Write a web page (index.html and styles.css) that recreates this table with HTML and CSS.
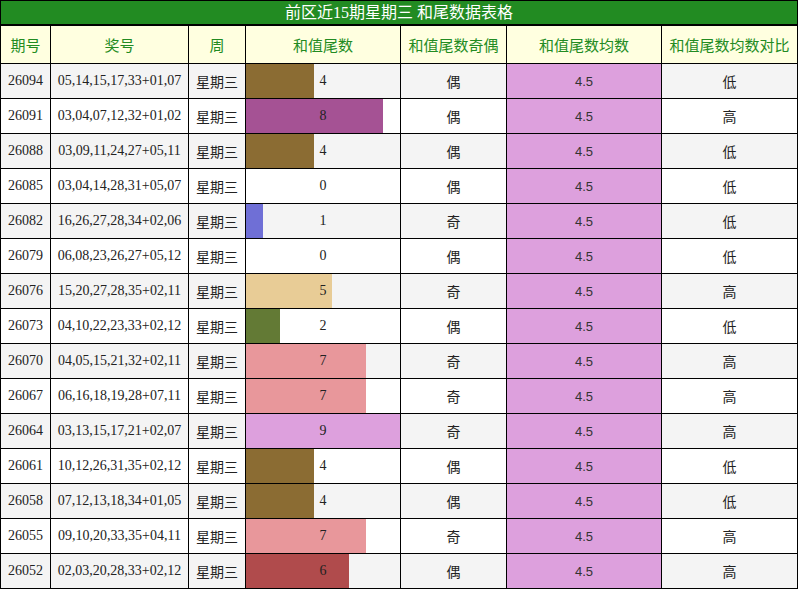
FILE: index.html
```html
<!DOCTYPE html>
<html lang="zh">
<head>
<meta charset="utf-8">
<title>前区近15期星期三 和尾数据表格</title>
<link rel="stylesheet" href="styles.css">
</head>
<body>
<div class="sheet">
  <div class="title">前区近15期星期三 和尾数据表格</div>
  <div class="grid">
    <div class="hd">期号</div><div class="hd">奖号</div><div class="hd">周</div><div class="hd">和值尾数</div><div class="hd">和值尾数奇偶</div><div class="hd">和值尾数均数</div><div class="hd">和值尾数均数对比</div>

    <div class="c alt">26094</div><div class="c alt">05,14,15,17,33+01,07</div><div class="c alt cjk">星期三</div><div class="c alt bar"><span class="fill v4" style="width:44.44%"></span><span class="num">4</span></div><div class="c alt cjk">偶</div><div class="c avg">4.5</div><div class="c alt cjk">低</div>

    <div class="c">26091</div><div class="c">03,04,07,12,32+01,02</div><div class="c cjk">星期三</div><div class="c bar"><span class="fill v8" style="width:88.89%"></span><span class="num">8</span></div><div class="c cjk">偶</div><div class="c avg">4.5</div><div class="c cjk">高</div>

    <div class="c alt">26088</div><div class="c alt">03,09,11,24,27+05,11</div><div class="c alt cjk">星期三</div><div class="c alt bar"><span class="fill v4" style="width:44.44%"></span><span class="num">4</span></div><div class="c alt cjk">偶</div><div class="c avg">4.5</div><div class="c alt cjk">低</div>

    <div class="c">26085</div><div class="c">03,04,14,28,31+05,07</div><div class="c cjk">星期三</div><div class="c bar"><span class="num">0</span></div><div class="c cjk">偶</div><div class="c avg">4.5</div><div class="c cjk">低</div>

    <div class="c alt">26082</div><div class="c alt">16,26,27,28,34+02,06</div><div class="c alt cjk">星期三</div><div class="c alt bar"><span class="fill v1" style="width:11.11%"></span><span class="num">1</span></div><div class="c alt cjk">奇</div><div class="c avg">4.5</div><div class="c alt cjk">低</div>

    <div class="c">26079</div><div class="c">06,08,23,26,27+05,12</div><div class="c cjk">星期三</div><div class="c bar"><span class="num">0</span></div><div class="c cjk">偶</div><div class="c avg">4.5</div><div class="c cjk">低</div>

    <div class="c alt">26076</div><div class="c alt">15,20,27,28,35+02,11</div><div class="c alt cjk">星期三</div><div class="c alt bar"><span class="fill v5" style="width:55.56%"></span><span class="num">5</span></div><div class="c alt cjk">奇</div><div class="c avg">4.5</div><div class="c alt cjk">高</div>

    <div class="c">26073</div><div class="c">04,10,22,23,33+02,12</div><div class="c cjk">星期三</div><div class="c bar"><span class="fill v2" style="width:22.22%"></span><span class="num">2</span></div><div class="c cjk">偶</div><div class="c avg">4.5</div><div class="c cjk">低</div>

    <div class="c alt">26070</div><div class="c alt">04,05,15,21,32+02,11</div><div class="c alt cjk">星期三</div><div class="c alt bar"><span class="fill v7" style="width:77.78%"></span><span class="num">7</span></div><div class="c alt cjk">奇</div><div class="c avg">4.5</div><div class="c alt cjk">高</div>

    <div class="c">26067</div><div class="c">06,16,18,19,28+07,11</div><div class="c cjk">星期三</div><div class="c bar"><span class="fill v7" style="width:77.78%"></span><span class="num">7</span></div><div class="c cjk">奇</div><div class="c avg">4.5</div><div class="c cjk">高</div>

    <div class="c alt">26064</div><div class="c alt">03,13,15,17,21+02,07</div><div class="c alt cjk">星期三</div><div class="c alt bar"><span class="fill v9" style="width:100%"></span><span class="num">9</span></div><div class="c alt cjk">奇</div><div class="c avg">4.5</div><div class="c alt cjk">高</div>

    <div class="c">26061</div><div class="c">10,12,26,31,35+02,12</div><div class="c cjk">星期三</div><div class="c bar"><span class="fill v4" style="width:44.44%"></span><span class="num">4</span></div><div class="c cjk">偶</div><div class="c avg">4.5</div><div class="c cjk">低</div>

    <div class="c alt">26058</div><div class="c alt">07,12,13,18,34+01,05</div><div class="c alt cjk">星期三</div><div class="c alt bar"><span class="fill v4" style="width:44.44%"></span><span class="num">4</span></div><div class="c alt cjk">偶</div><div class="c avg">4.5</div><div class="c alt cjk">低</div>

    <div class="c">26055</div><div class="c">09,10,20,33,35+04,11</div><div class="c cjk">星期三</div><div class="c bar"><span class="fill v7" style="width:77.78%"></span><span class="num">7</span></div><div class="c cjk">奇</div><div class="c avg">4.5</div><div class="c cjk">高</div>

    <div class="c alt">26052</div><div class="c alt">02,03,20,28,33+02,12</div><div class="c alt cjk">星期三</div><div class="c alt bar"><span class="fill v6" style="width:66.67%"></span><span class="num">6</span></div><div class="c alt cjk">偶</div><div class="c avg">4.5</div><div class="c alt cjk">高</div>
  </div>
</div>
</body>
</html>
```

FILE: styles.css
```css
html, body {
  margin: 0;
  padding: 0;
  background: #ffffff;
}

.sheet {
  width: 798px;
  background: #000000;
  padding: 1px 0 0 0;
  font-family: "Liberation Serif", "Noto Sans CJK SC", serif;
}

.title {
  height: 23px;
  margin: 0 1px;
  background: #228b22;
  color: #ffffff;
  font-size: 16px;
  line-height: 23px;
  text-align: center;
  font-family: "Liberation Serif", "Noto Sans CJK SC", sans-serif;
}

.grid {
  display: grid;
  grid-template-columns: 49px 137px 56px 154px 105px 154px 135px;
  grid-template-rows: 37px;
  grid-auto-rows: 34px;
  gap: 1px;
  padding: 2px 1px 1px 1px;
}

.grid .hd {
  background: #ffffe0;
  color: #228b22;
  font-family: "Noto Sans CJK SC", sans-serif;
  font-size: 15px;
  display: flex;
  align-items: center;
  justify-content: center;
}

.c {
  background: #ffffff;
  color: #222222;
  font-size: 14px;
  display: flex;
  align-items: center;
  justify-content: center;
  white-space: nowrap;
}

.c.alt {
  background: #f4f4f4;
}

.cjk {
  font-family: "Noto Sans CJK SC", sans-serif;
}

.c.avg {
  background: #dda0dd;
  font-family: "Liberation Sans", "Noto Sans", sans-serif;
  font-size: 13px;
  color: #333333;
}

.bar {
  position: relative;
}

.bar .fill {
  position: absolute;
  left: 0;
  top: 0;
  bottom: 0;
}

.bar .num {
  position: relative;
}

.v1 { background: #6f6fd6; }
.v2 { background: #637a35; }
.v4 { background: #8b6c33; }
.v5 { background: #e8cc96; }
.v6 { background: #b04b4c; }
.v7 { background: #e8979b; }
.v8 { background: #a55294; }
.v9 { background: #dda0dd; }
```
